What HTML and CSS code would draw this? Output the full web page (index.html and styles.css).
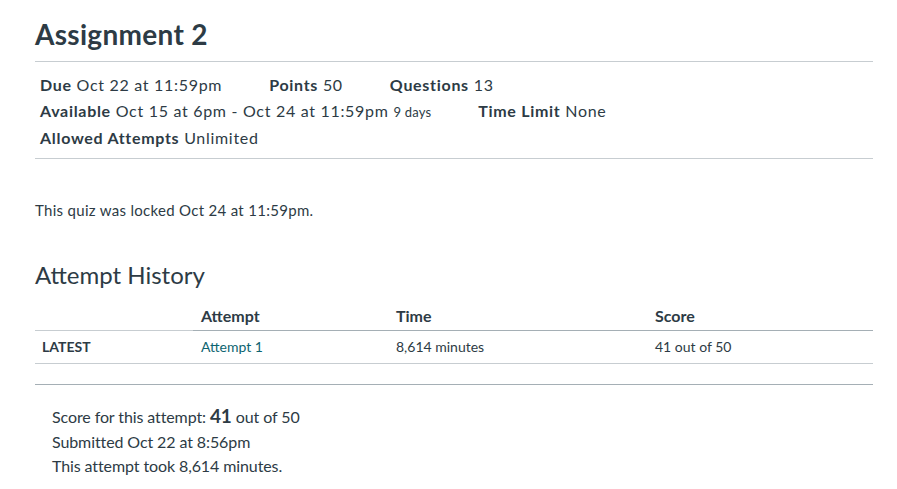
FILE: index.html
```html
<!DOCTYPE html>
<html>
<head>
<meta charset="utf-8">
<link rel="stylesheet" href="styles.css">
</head>
<body>
<main class="page">
  <h1 class="title">Assignment 2</h1>
  <div class="details">
    <div class="row">
      <span class="item"><b>Due</b> Oct 22 at 11:59pm</span>
      <span class="item"><b>Points</b> 50</span>
      <span class="item"><b>Questions</b> 13</span>
    </div>
    <div class="row">
      <span class="item"><b>Available</b> Oct 15 at 6pm - Oct 24 at 11:59pm <small>9 days</small></span>
      <span class="item"><b>Time Limit</b> None</span>
    </div>
    <div class="row">
      <span class="item"><b>Allowed Attempts</b> Unlimited</span>
    </div>
  </div>
  <p class="locked">This quiz was locked Oct 24 at 11:59pm.</p>
  <h2 class="history">Attempt History</h2>
  <table class="attempts">
    <thead>
      <tr>
        <th class="c1"></th>
        <th class="c2">Attempt</th>
        <th class="c3">Time</th>
        <th class="c4">Score</th>
      </tr>
    </thead>
    <tbody>
      <tr>
        <td class="latest">LATEST</td>
        <td><a href="#">Attempt 1</a></td>
        <td>8,614 minutes</td>
        <td>41 out of 50</td>
      </tr>
    </tbody>
  </table>
  <div class="result">
    <div>Score for this attempt: <span class="big">41</span> out of 50</div>
    <div>Submitted Oct 22 at 8:56pm</div>
    <div>This attempt took 8,614 minutes.</div>
  </div>
</main>
</body>
</html>
```
FILE: styles.css
```css
html, body {
  margin: 0;
  padding: 0;
  background: #ffffff;
}
body {
  font-family: Lato, "Open Sans", sans-serif;
  color: #2d3b45;
}
.page {
  width: 838px;
  padding: 0 0 0 35px;
}
.title {
  margin: 0;
  padding-top: 16px;
  font-size: 28px;
  font-weight: 700;
  line-height: 36px;
  letter-spacing: 0.3px;
  padding-bottom: 9px;
  border-bottom: 1px solid #c7cdd1;
}
.details {
  padding: 10px 5px 7px 5px;
  border-bottom: 1px solid #c7cdd1;
  font-size: 16px;
  letter-spacing: 0.7px;
}
.row {
  display: flex;
  gap: 47px;
  line-height: 26px;
}
.item b {
  font-weight: 700;
}
.item small {
  font-size: 13px;
  letter-spacing: 0.2px;
}
.locked {
  margin: 41px 0 0 0;
  font-size: 15px;
  letter-spacing: 0.3px;
  line-height: 20px;
}
.history {
  margin: 39px 0 0 0;
  font-size: 24px;
  font-weight: 400;
  line-height: 32px;
}
.attempts {
  margin-top: 10px;
  width: 838px;
  border-collapse: collapse;
  font-size: 14px;
}
.attempts th {
  text-align: left;
  font-size: 16px;
  font-weight: 700;
  padding: 5px 8px 4px 8px;
  line-height: 20px;
  border-bottom: 1px solid #a5afb5;
}
.attempts th.c1 {
  border-bottom-color: #c7cdd1;
}
.c1 { width: 142px; }
.c2 { width: 179px; }
.c3 { width: 243px; }
.attempts td {
  padding: 6px 6px 6px 8px;
  line-height: 20px;
  border-bottom: 1px solid #c7cdd1;
}
.attempts td.latest {
  font-weight: 700;
  padding-left: 7px;
}
.attempts a {
  color: #0e6470;
  text-decoration: none;
}
.result {
  margin-top: 20px;
  border-top: 1px solid #a5afb5;
  padding: 19px 17px 0 17px;
  font-size: 16px;
  letter-spacing: -0.1px;
  line-height: 24.5px;
}
.big {
  font-size: 19px;
  font-weight: 700;
}
```
